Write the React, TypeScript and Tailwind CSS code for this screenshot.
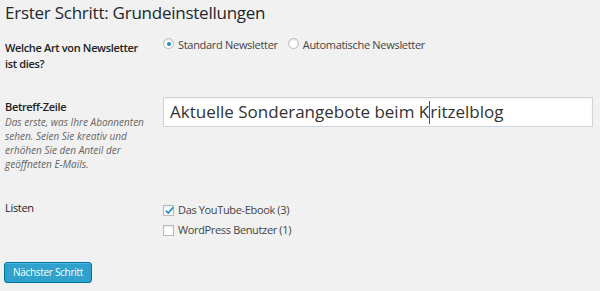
import React from "react";

export default function App() {
  return (
    <div
      className="w-[600px] h-[291px] bg-[#f1f1f1] pl-[5px] overflow-hidden text-[#222]"
      style={{ fontFamily: '"Open Sans", "Noto Sans", sans-serif' }}
    >
      <h2 className="text-[17px] leading-[25px] tracking-[-0.25px] font-normal text-[#23282d] m-0">
        Erster Schritt: Grundeinstellungen
      </h2>

      {/* Row 1 */}
      <div className="flex mt-[12px]">
        <div className="w-[158px] pt-[3px] text-[11px] leading-[16px] tracking-[-0.35px] font-semibold text-[#222]">
          Welche Art von Newsletter
          <br />
          ist dies?
        </div>
        <div className="flex items-start text-[11px] leading-[16px] tracking-[-0.3px] text-[#444]">
          <span className="mt-[1px] w-[11px] h-[11px] rounded-full border border-[#b4b9be] bg-white flex items-center justify-center shadow-[inset_0_1px_2px_rgba(0,0,0,0.1)]">
            <span className="w-[4px] h-[4px] rounded-full bg-[#1e8cbe]" />
          </span>
          <span className="ml-[4px]">Standard Newsletter</span>
          <span className="ml-[10px] mt-[1px] w-[11px] h-[11px] rounded-full border border-[#b4b9be] bg-white shadow-[inset_0_1px_2px_rgba(0,0,0,0.1)]" />
          <span className="ml-[4px]">Automatische Newsletter</span>
        </div>
      </div>

      {/* Row 2 */}
      <div className="flex mt-[25px]">
        <div className="w-[158px] pt-[2px]">
          <div className="text-[11px] leading-[16px] tracking-[-0.35px] font-semibold text-[#222]">
            Betreff-Zeile
          </div>
          <div className="text-[10px] leading-[14px] italic text-[#666]">
            Das erste, was Ihre Abonnenten
            <br />
            sehen. Seien Sie kreativ und
            <br />
            erhöhen Sie den Anteil der
            <br />
            geöffneten E-Mails.
          </div>
        </div>
        <div className="w-[430px] h-[30px] border border-[#cbd5dd] bg-white shadow-[inset_0_1px_2px_rgba(0,0,0,0.07)] pl-[6px] text-[17px] leading-[28px] text-[#333] whitespace-nowrap flex items-center">
          <span>Aktuelle Sonderangebote beim K</span>
          <span className="inline-block w-[1px] h-[23px] bg-[#555]" />
          <span>ritzelblog</span>
        </div>
      </div>

      {/* Row 3 */}
      <div className="flex mt-[29px]">
        <div className="w-[158px] text-[11px] leading-[16px] tracking-[-0.3px] text-[#222]">Listen</div>
        <div className="pt-[2px] flex flex-col gap-[4px] text-[11px] leading-[16px] tracking-[-0.35px] text-[#444]">
          <div className="flex items-start">
            <span className="mt-[3px] w-[11px] h-[11px] border border-[#b4b9be] bg-white relative shadow-[inset_0_1px_2px_rgba(0,0,0,0.1)]">
              <svg
                viewBox="0 0 12 12"
                className="absolute left-[0px] top-[-1px] w-[11px] h-[11px]"
              >
                <path d="M2 6.2 L4.6 8.8 L10 2.6" fill="none" stroke="#1e8cbe" strokeWidth="1.8" />
              </svg>
            </span>
            <span className="ml-[4px]">Das YouTube-Ebook (3)</span>
          </div>
          <div className="flex items-start">
            <span className="mt-[3px] w-[11px] h-[11px] border border-[#b4b9be] bg-white shadow-[inset_0_1px_2px_rgba(0,0,0,0.1)]" />
            <span className="ml-[4px]">WordPress Benutzer (1)</span>
          </div>
        </div>
      </div>

      {/* Button */}
      <div className="flex mt-[24px] -ml-[1px]">
        <button className="h-[21px] px-[8px] rounded-[3px] bg-[#2ea2cc] border border-[#0074a2] text-white text-[10px] tracking-[-0.3px] leading-[19px] shadow-[inset_0_1px_0_rgba(120,200,230,0.5)]">
          Nächster Schritt
        </button>
      </div>
    </div>
  );
}
